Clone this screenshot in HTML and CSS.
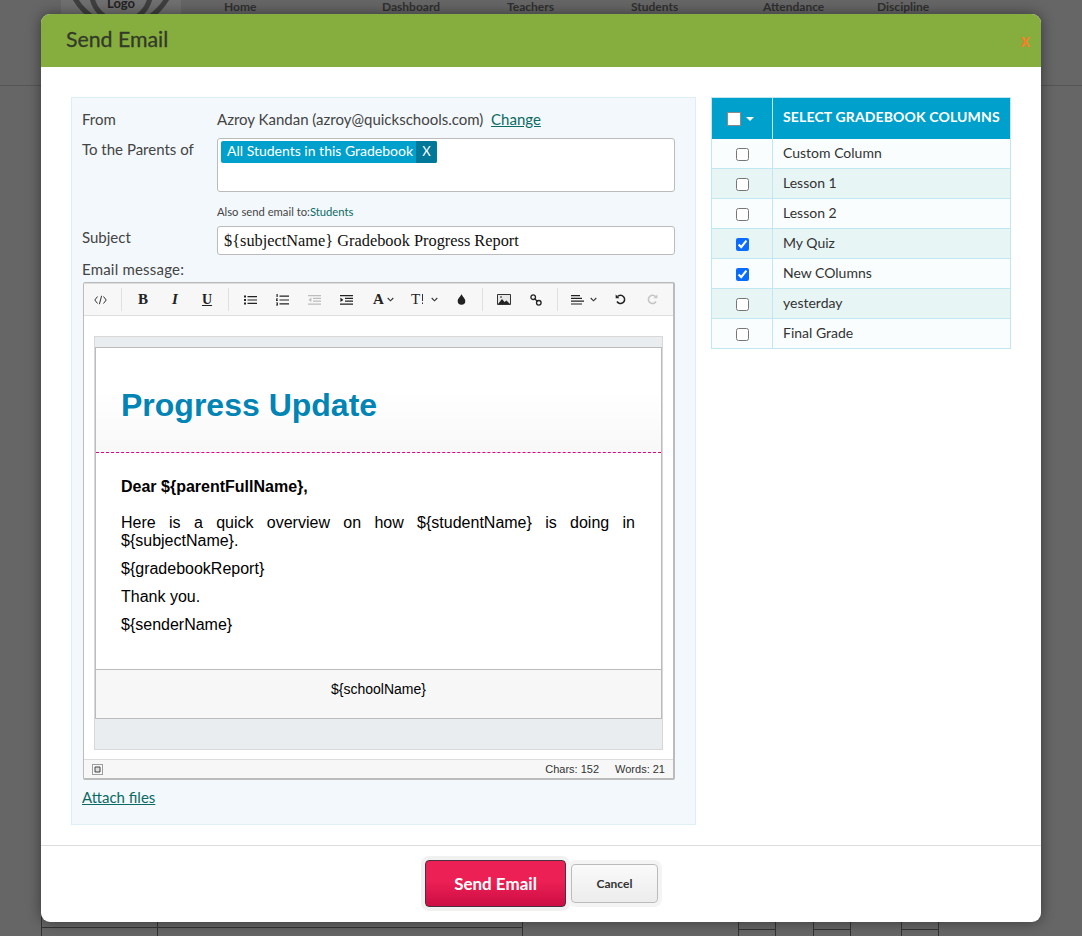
FILE: index.html
```html
<!DOCTYPE html>
<html lang="en">
<head>
<meta charset="utf-8">
<title>Send Email</title>
<link rel="stylesheet" href="styles.css">
</head>
<body>
<div class="page">
  <header class="site-header">
    <div class="logo-box"><div class="logo-ring"><span class="logo-text">Logo</span></div></div>
    <nav class="site-nav">
      <span class="n1">Home</span><span class="n2">Dashboard</span><span class="n3">Teachers</span><span class="n4">Students</span><span class="n5">Attendance</span><span class="n6">Discipline</span>
    </nav>
  </header>
  <div class="page-bottom">
    <div class="bg-table"><div class="bg-c1"></div><div class="bg-c2"></div></div>
    <div class="bg-cells"><i></i><b></b><i></i><b></b><i></i></div>
  </div>
</div>

<section class="modal">
  <div class="modal-head">
    <h1>Send Email</h1>
    <span class="modal-close">x</span>
  </div>
  <div class="modal-body">
    <div class="form-panel">
      <div class="row row-from">
        <span class="label">From</span>
        <span class="value">Azroy Kandan (azroy@quickschools.com)&nbsp; <a href="#" class="link link-change">Change</a></span>
      </div>
      <div class="row row-to">
        <span class="label">To the Parents of</span>
        <div class="to-box"><span class="chip"><span class="chip-text">All Students in this Gradebook</span><span class="chip-x">X</span></span></div>
      </div>
      <div class="also">Also send email to:<a href="#" class="also-link">Students</a></div>
      <div class="row row-subject">
        <span class="label">Subject</span>
        <div class="subject-input">${subjectName} Gradebook Progress Report</div>
      </div>
      <div class="msg-label">Email message:</div>

      <div class="editor">
        <div class="toolbar">
          <div class="tgroup first">
            <span class="tb"><svg width="13" height="10" viewBox="0 0 13 10" class="ic"><path d="M3.500 1.500 0.800 5l2.700 3.500M9.500 1.500 12.200 5 9.500 8.500M7.600 .8 5.400 9.200" fill="none" stroke="#333" stroke-width="1"/></svg></span>
          </div>
          <div class="tgroup">
            <span class="tb t-b">B</span><span class="tb t-i">I</span><span class="tb t-u">U</span>
          </div>
          <div class="tgroup">
            <span class="tb"><svg width="13" height="10" viewBox="0 0 13 10"><path d="M0 .5h2v2H0zM0 4h2v2H0zM0 7.500h2v2H0zM3.500 1h9.500v1.200H3.500zM3.500 4.400h9.500v1.200H3.500zM3.500 7.800h9.500V9H3.500z" fill="#222"/></svg></span>
            <span class="tb"><svg width="13" height="12" viewBox="0 0 13 12"><path d="M.5 0h1.200v3H.5zM0 4.600h2v.8H.8v.8H2V7H0zM0 8.500h2v3H0v-.7h1.200v-.4H.4v-.7h.8v-.4H0zM3.500 1.500H13v1.200H3.500zM3.500 5.400H13v1.200H3.500zM3.500 9.300H13v1.200H3.500z" fill="#222"/></svg></span>
            <span class="tb"><svg width="13" height="10" viewBox="0 0 13 10"><path d="M0 0h13v1.200H0zM5 2.800h8V4H5zM5 5.600h8v1.200H5zM0 8.500h13v1.200H0zM3.400 2.600v4.500L.4 4.900z" fill="#bdbdbd"/></svg></span>
            <span class="tb"><svg width="13" height="10" viewBox="0 0 13 10"><path d="M0 0h13v1.200H0zM5 2.800h8V4H5zM5 5.600h8v1.200H5zM0 8.500h13v1.200H0zM.4 2.600v4.500l3-2.200z" fill="#222"/></svg></span>
            <span class="tb tb-a"><span class="t-a">A</span><svg class="caret" width="7" height="5" viewBox="0 0 7 5"><path d="M.7 1 3.500 3.800 6.300 1" fill="none" stroke="#333" stroke-width="1.100"/></svg></span>
            <span class="tb tb-t"><span class="t-t">T</span><svg width="3" height="11" viewBox="0 0 3 11"><path d="M1 0h1v7H1zM1 8.500h1V10H1z" fill="#333"/></svg><svg class="caret" width="7" height="5" viewBox="0 0 7 5"><path d="M.7 1 3.500 3.800 6.300 1" fill="none" stroke="#333" stroke-width="1.100"/></svg></span>
            <span class="tb"><svg width="9" height="11" viewBox="0 0 9 11"><path d="M4.500 0C5 2 8.300 4.400 8.300 7a3.800 3.800 0 0 1-7.600 0C.7 4.400 4 2 4.500 0z" fill="#222"/></svg></span>
          </div>
          <div class="tgroup">
            <span class="tb"><svg width="14" height="11" viewBox="0 0 14 11"><path d="M.5.5h13v10H.5z" fill="#e8e8e8" stroke="#333"/><path d="M1 10 5 5l2.500 3 2-1.500L13 10z" fill="#222"/><circle cx="4" cy="3" r="1" fill="#666"/></svg></span>
            <span class="tb"><svg width="12" height="12" viewBox="0 0 12 12"><circle cx="3.200" cy="3.200" r="2.300" fill="none" stroke="#222" stroke-width="1.300"/><circle cx="8.800" cy="8.800" r="2.300" fill="none" stroke="#222" stroke-width="1.300"/><path d="M4.500 4.500 7.500 7.500" stroke="#222" stroke-width="1.300"/></svg></span>
          </div>
          <div class="tgroup last">
            <span class="tb tb-al"><svg width="13" height="10" viewBox="0 0 13 10"><path d="M0 0h9v1.200H0zM0 2.800h11V4H0zM0 5.600h13v1.200H0zM0 8.400h11v1.200H0z" fill="#222"/></svg><svg class="caret" width="7" height="5" viewBox="0 0 7 5"><path d="M.7 1 3.500 3.800 6.300 1" fill="none" stroke="#333" stroke-width="1.100"/></svg></span>
            <span class="tb"><svg width="11" height="11" viewBox="0 0 11 11"><path d="M2.500 2.600A4.100 4.100 0 1 1 2 7.500" fill="none" stroke="#222" stroke-width="1.500"/><path d="M.7 .6v3.700h3.700z" fill="#222"/></svg></span>
            <span class="tb"><svg width="11" height="11" viewBox="0 0 11 11"><path d="M8.500 2.600A4.100 4.100 0 1 0 9 7.500" fill="none" stroke="#c4c4c4" stroke-width="1.500"/><path d="M10.300 .6v3.700H6.600z" fill="#c4c4c4"/></svg></span>
          </div>
        </div>

        <div class="editor-area">
          <div class="mail">
            <div class="mail-strip"></div>
            <div class="mail-inner">
              <div class="mail-head"><h2>Progress Update</h2></div>
              <div class="mail-content">
                <p class="dear">Dear ${parentFullName},</p>
                <p class="overview">Here is a quick overview on how ${studentName} is doing in ${subjectName}.</p>
                <p>${gradebookReport}</p>
                <p>Thank you.</p>
                <p>${senderName}</p>
              </div>
              <div class="mail-foot">${schoolName}</div>
            </div>
            <div class="mail-tail"></div>
          </div>
        </div>

        <div class="statusbar">
          <svg width="11" height="11" viewBox="0 0 11 11"><path d="M.5.5h10v10H.5z" fill="none" stroke="#444" stroke-dasharray="1 1"/><path d="M3 3h5v5H3z" fill="#ddd" stroke="#444"/></svg>
          <span class="counts"><span>Chars: 152</span><span>Words: 21</span></span>
        </div>
      </div>
      <a href="#" class="link attach">Attach files</a>
    </div>

    <div class="cols">
      <div class="cols-head">
        <div class="cols-cell-a"><span class="head-check"></span><span class="head-caret"></span></div>
        <div class="cols-cell-b">SELECT GRADEBOOK COLUMNS</div>
      </div>
      <label class="cols-row"><span class="cols-cell-a"><input type="checkbox"></span><span class="cols-cell-b">Custom Column</span></label>
      <label class="cols-row"><span class="cols-cell-a"><input type="checkbox"></span><span class="cols-cell-b">Lesson 1</span></label>
      <label class="cols-row"><span class="cols-cell-a"><input type="checkbox"></span><span class="cols-cell-b">Lesson 2</span></label>
      <label class="cols-row"><span class="cols-cell-a"><input type="checkbox" checked></span><span class="cols-cell-b">My Quiz</span></label>
      <label class="cols-row"><span class="cols-cell-a"><input type="checkbox" checked></span><span class="cols-cell-b">New COlumns</span></label>
      <label class="cols-row"><span class="cols-cell-a"><input type="checkbox"></span><span class="cols-cell-b">yesterday</span></label>
      <label class="cols-row"><span class="cols-cell-a"><input type="checkbox"></span><span class="cols-cell-b">Final Grade</span></label>
    </div>
  </div>
  <div class="modal-foot">
    <button class="btn-send">Send Email</button>
    <button class="btn-cancel">Cancel</button>
  </div>
</section>
</body>
</html>
```
FILE: styles.css
```css
* { box-sizing: border-box; }
html, body { margin: 0; padding: 0; height: 936px; overflow: hidden; }
body { background: #666; font-family: Lato, "Open Sans", sans-serif; font-size: 15px; color: #333; }
a { text-decoration: underline; }

/* dimmed page behind the dialog */
.page { height: 936px; overflow: hidden; }
.site-header { height: 86px; border-bottom: 1px solid #555; display: flex; position: relative; }
.logo-box { width: 120px; height: 30px; margin-left: 61px; background: #707070; overflow: hidden; display: flex; justify-content: center; }
.logo-ring { width: 110px; height: 110px; flex: none; margin-top: -82px; border: 5px solid #3f3f3f; border-radius: 50%; display: flex; align-items: flex-start; justify-content: center; }
.logo-text { width: 64px; height: 64px; flex: none; margin-top: 37px; padding-top: 31px; border: 5px solid #3f3f3f; border-radius: 50%; text-align: center; font: bold 13px/14px Lato, sans-serif; color: #222; }
.site-nav { position: relative; flex: 1; font: bold 12px Lato, sans-serif; color: #303030; height: 14px; }
.site-nav span { position: absolute; top: -1px; }
.n1 { left: 43px; } .n2 { left: 201px; } .n3 { left: 326px; } .n4 { left: 450px; } .n5 { left: 582px; } .n6 { left: 696px; }
.page-bottom { margin-top: 829px; display: flex; margin-left: 41px; height: 21px; }
.bg-table { width: 482px; display: flex; border-left: 1px solid #333; border-right: 1px solid #333; background: linear-gradient(#333, #333) 0 12px / 100% 1px no-repeat; }
.bg-c1 { width: 116px; border-right: 1px solid #333; }
.bg-cells { margin-left: 215px; display: flex; }
.bg-cells i { width: 38px; border-left: 1px solid #333; border-right: 1px solid #333; background: linear-gradient(#333, #333) 0 14px / 100% 1px no-repeat; }
.bg-cells b { width: 37px; }
.bg-cells b:nth-child(4) { width: 50px; }

/* dialog */
.modal { position: absolute; left: 41px; top: 14px; width: 1000px; height: 908px; background: #fff; border-radius: 9px; overflow: hidden; box-shadow: 0 0 14px rgba(0,0,0,.45); display: flex; flex-direction: column; }
.modal-head { height: 53px; background: #86ae3f; display: flex; align-items: center; justify-content: space-between; padding: 0 11px 0 25px; flex: none; }
.modal-head h1 { margin: -3px 0 0; font: 400 21.300px Lato, sans-serif; color: #333a28; -webkit-text-stroke: .3px #333a28; }
.modal-close { color: #f58025; font: bold 18px Lato, sans-serif; margin-top: -1px; }
.modal-body { height: 778px; flex: none; padding: 30px 30px 0; display: flex; align-items: flex-start; gap: 15px; }

.form-panel { width: 625px; height: 728px; background: #f3f8fc; border: 1px solid #dceff6; padding: 0 20px 0 10px; flex: none; }
.row { display: flex; }
.label { width: 135px; flex: none; color: #444; }
.row-from { padding-top: 13px; height: 40px; line-height: 17px; }
.value { color: #444; white-space: nowrap; }
.link { color: #0b6a64; }
.row-to { height: 54px; }
.row-to .label { padding-top: 3px; line-height: 17px; }
.to-box { width: 458px; height: 54px; background: #fff; border: 1px solid #bbb; border-radius: 3px; padding: 2px 3px; }
.chip { display: inline-flex; height: 22px; line-height: 20px; background: #00a0cd; color: #fff; border-radius: 2px; font-size: 14px; overflow: hidden; }
.chip-text { padding: 0 3px 0 6px; }
.chip-x { width: 21px; text-align: center; background: #00789a; font-size: 13px; }
.also { margin: 13px 0 0 135px; height: 21px; line-height: 13px; font-size: 11.250px; color: #444; white-space: nowrap; }
.also-link { color: #0b6a64; text-decoration: none; }
.row-subject { height: 29px; }
.row-subject .label { line-height: 22px; }
.subject-input { width: 458px; height: 29px; background: #fff; border: 1px solid #bbb; border-radius: 3px; padding: 0 6px; font: 16.350px/27px "Liberation Serif", serif; color: #111; white-space: nowrap; }
.msg-label { height: 27px; padding-top: 6px; line-height: 17px; color: #444; letter-spacing: .2px; }

.editor { margin-left: 1px; width: 592px; height: 498px; border: 1px solid #bbb; border-width: 1px 2px 2px 1px; background: #fff; display: flex; flex-direction: column; border-radius: 2px; }
.toolbar { height: 33px; flex: none; background: #f7f7f7; border-bottom: 1px solid #ddd; border-top: 1px solid #ddd; display: flex; align-items: stretch; }
.tgroup { display: flex; align-items: center; padding: 0 6px 0 5px; position: relative; }
.tgroup::after { content: ""; position: absolute; right: 0; top: 4px; bottom: 4px; width: 1px; background: #e0e0e0; }
.tgroup.first { padding-left: 0; padding-right: 6px; }
.tgroup.last::after { display: none; }
.tb { width: 32px; height: 30px; display: flex; align-items: center; justify-content: center; flex: none; color: #222; font-family: "Liberation Serif", serif; }
.t-b { font-weight: 700; font-size: 15px; }
.t-i { font-style: italic; font-weight: 700; font-size: 15px; }
.t-u { text-decoration: underline; font-weight: 700; font-size: 14px; }
.tb-a { width: 37px; justify-content: flex-start; padding-left: 11px; gap: 3px; }
.t-a { font-weight: 700; font-size: 15px; }
.tb-t { width: 46px; justify-content: flex-start; padding-left: 12px; gap: 1px; }
.t-t { font-size: 15px; }
.tb-t .caret { margin-left: 6px; }
.tb-al { width: 41px; justify-content: flex-start; padding-left: 8px; gap: 6px; }

.editor-area { flex: 1; padding: 20px 10px 10px; min-height: 0; }
.mail { height: 414px; width: 569px; background: #e9edf0; border: 1px solid #d8d8d8; display: flex; flex-direction: column; font-family: "Liberation Sans", sans-serif; color: #000; }
.mail-strip { height: 10px; flex: none; }
.mail-inner { width: 567px; height: 372px; background: #fff; border: 1px solid #bbb; flex: none; display: flex; flex-direction: column; }
.mail-head { height: 105px; padding: 11px 25px 0; display: flex; align-items: center; border-bottom: 1px dashed #e6007e; background: linear-gradient(#fff 40%, #f8f8f8); flex: none; }
.mail-head h2 { margin: 0; font: bold 32px "Liberation Sans", sans-serif; color: #0284b5; }
.mail-content { flex: 1; padding: 25px 26px 0 25px; font-size: 16px; line-height: 18px; }
.mail-content p { margin: 0 0 10px; }
.dear { font-weight: 700; padding-bottom: 8px; }
.overview { text-align: justify; }
.mail-foot { height: 49px; flex: none; background: #f7f7f7; border-top: 1px solid #bbb; text-align: center; font-size: 14px; padding-top: 11px; line-height: 17px; }
.mail-tail { flex: 1; }
.statusbar { height: 19px; flex: none; background: #f7f7f7; border-top: 1px solid #ddd; display: flex; align-items: center; justify-content: space-between; padding: 0 8px 0 8px; font: 11px "Liberation Sans", sans-serif; color: #333; }
.counts { display: flex; gap: 16px; }
.attach { display: block; margin-top: 9px; width: max-content; line-height: 17px; }

/* column picker */
.cols { width: 300px; flex: none; border: 1px solid #bfe8f2; border-bottom: 0; font-size: 14px; }
.cols-head { height: 41px; background: #00a0cd; display: flex; color: #fff; font-weight: 700; font-size: 14px; letter-spacing: .14px; padding-bottom: 1px; }
.cols-head .cols-cell-a { border-right: 1px solid #bfe8f2; gap: 5px; padding-right: 4px; margin-bottom: -1px; }
.cols-head .cols-cell-b { padding-bottom: 3px; }
.cols-row { height: 30px; display: flex; border-bottom: 1px solid #bfe8f2; background: #f9fdfe; color: #333; }
.cols-row:nth-child(odd) { background: #e8f5f5; }
.cols-cell-a { width: 61px; flex: none; display: flex; align-items: center; justify-content: center; border-right: 1px solid #bfe8f2; }
.cols-cell-b { flex: 1; padding: 0 0 2px 10px; display: flex; align-items: center; white-space: nowrap; }
.cols-row input { margin: 2px 0 0; width: 13px; height: 13px; accent-color: #0a6cff; }
.head-check { width: 14px; height: 14px; background: #fff; border: 1px solid #8a8a8a; }
.head-caret { width: 0; height: 0; border: 4px solid transparent; border-top: 4px solid #fff; border-bottom: 0; }

/* footer */
.modal-foot { flex: 1; border-top: 1px solid #ddd; display: flex; justify-content: center; align-items: center; gap: 5px; padding: 0 0 2px 1px; }
.btn-send { width: 141px; height: 47px; border: 1px solid #4a3040; border-radius: 4px; background: linear-gradient(#ec2054 45%, #cc0d44); color: #fff; font: 700 17px Lato, sans-serif; box-shadow: 0 0 0 4px #f1f1f1; }
.btn-cancel { width: 87px; height: 39px; border: 1px solid #bbb; border-radius: 4px; background: linear-gradient(#fafafa, #ececec); color: #333; font: 700 12px Lato, sans-serif; box-shadow: 0 0 0 4px #f4f4f4; }
```
